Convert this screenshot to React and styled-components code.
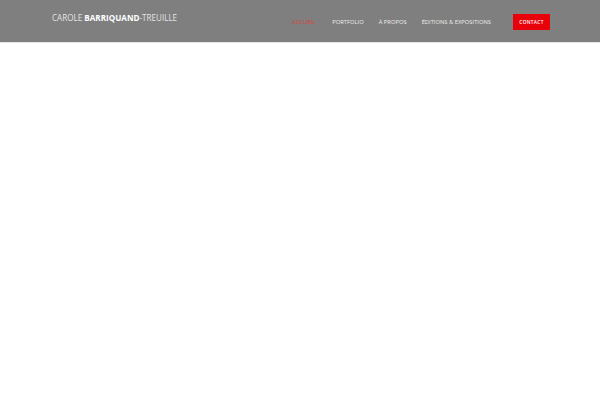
import React from "react";
import styled, { createGlobalStyle } from "styled-components";

const Global = createGlobalStyle`
  html, body { margin: 0; padding: 0; background: #fff; }
  body { font-family: "Open Sans", "Liberation Sans", sans-serif; }
`;

const Header = styled.header`
  height: 42px;
  background: #7f7f7f;
  border-bottom: 1px solid #e6e6e6;
  box-shadow: 0 1px 2px rgba(0,0,0,0.08);
  display: flex;
  align-items: center;
  justify-content: space-between;
  padding: 0 50px 0 52px;
`;

const Logo = styled.div`
  font-size: 8.1px;
  color: #e4e4e4;
  margin-top: -8px;
  white-space: nowrap;
  b { font-weight: 700; color: #fff; }
`;

const Nav = styled.nav`
  display: flex;
  align-items: center;
  margin-top: 1px;
`;

const NavItem = styled.a`
  font-size: 5.8px;
  color: ${p => (p.$active ? "#d9403a" : "#ececec")};
  text-transform: uppercase;
  margin-right: ${p => p.$gap}px;
  white-space: nowrap;
  text-decoration: none;
`;

const Contact = styled.a`
  width: 37px;
  height: 16px;
  background: #e8000b;
  color: #fff;
  font-size: 4.8px;
  font-weight: 600;
  letter-spacing: 0.3px;
  display: flex;
  align-items: center;
  justify-content: center;
  text-decoration: none;
`;

export default function App() {
  return (
    <>
      <Global />
      <Header>
        <Logo>
          CAROLE <b>BARRIQUAND</b>-TREUILLE
        </Logo>
        <Nav>
          <NavItem $active $gap={17}>Accueil</NavItem>
          <NavItem $gap={15}>Portfolio</NavItem>
          <NavItem $gap={15}>À propos</NavItem>
          <NavItem $gap={22}>Éditions &amp; Expositions</NavItem>
          <Contact>CONTACT</Contact>
        </Nav>
      </Header>
    </>
  );
}
